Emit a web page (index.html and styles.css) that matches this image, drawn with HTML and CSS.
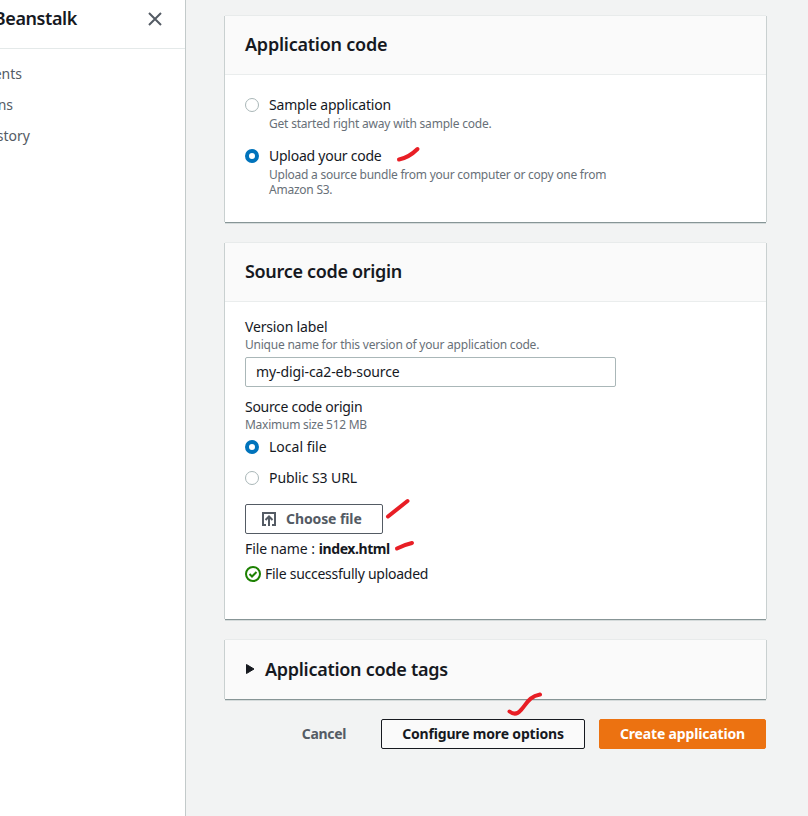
FILE: index.html
```html
<!DOCTYPE html>
<html lang="en">
<head>
<meta charset="utf-8">
<title>Elastic Beanstalk</title>
<link rel="stylesheet" href="styles.css">
</head>
<body>
<div class="app">
  <aside class="sidebar">
    <header class="side-head">
      <div class="side-title"><span>Beanstalk</span></div>
      <svg class="close" width="14" height="14" viewBox="0 0 14 14"><path d="M1 1l12 12M13 1L1 13"/></svg>
    </header>
    <nav class="side-nav">
      <a class="nav-env">ents</a>
      <a class="nav-app">ns</a>
      <a class="nav-hist">story</a>
    </nav>
  </aside>
  <main class="main">
    <section class="card card-code">
      <h2 class="card-head"><span class="h-code">Application code</span></h2>
      <div class="card-body">
        <div class="option">
          <i class="radio"></i>
          <div><div class="label l-sample">Sample application</div><p class="hint t-sample">Get started right away with sample code.</p></div>
        </div>
        <div class="option">
          <i class="radio on"></i>
          <div><div class="label l-upload">Upload your code</div><p class="hint t-upload">Upload a source bundle from your computer or copy one from Amazon S3.</p></div>
        </div>
      </div>
    </section>
    <section class="card card-origin">
      <h2 class="card-head"><span class="h-origin">Source code origin</span></h2>
      <div class="card-body">
        <div class="label l-version">Version label</div>
        <p class="hint t-version">Unique name for this version of your application code.</p>
        <div class="field"><span>my-digi-ca2-eb-source</span></div>
        <div class="label l-origin">Source code origin</div>
        <p class="hint t-max">Maximum size 512 MB</p>
        <div class="option small"><i class="radio on"></i><div class="label l-local">Local file</div></div>
        <div class="option small second"><i class="radio"></i><div class="label l-s3">Public S3 URL</div></div>
        <div class="btn choose">
          <svg width="16" height="16" viewBox="0 0 16 16"><path d="M5 14H2V2h12v12h-3M8 15V6M4.500 9L8 5.500 11.500 9"/></svg>
          <span>Choose file</span>
        </div>
        <div class="file"><span class="f-label">File name :</span><b>index.html</b></div>
        <div class="status">
          <svg width="16" height="16" viewBox="0 0 16 16"><circle cx="8" cy="8" r="7"/><path d="M4.500 8l2.500 2.500L11.500 6"/></svg>
          <span>File successfully uploaded</span>
        </div>
      </div>
    </section>
    <section class="card card-tags">
      <svg width="9" height="12" viewBox="0 0 9 12"><path d="M.5 1.500v9l7.500-4.500z"/></svg>
      <h2 class="h-tags">Application code tags</h2>
    </section>
    <div class="actions">
      <div class="cancel"><span>Cancel</span></div>
      <div class="btn configure"><span>Configure more options</span></div>
      <div class="btn create"><span>Create application</span></div>
    </div>
  </main>
  <svg class="marks" width="808" height="816" viewBox="0 0 808 816">
    <path d="M399 159.500q10-2 18.500-10.500"/>
    <path d="M388 516.500L407.500 501"/>
    <path d="M397 548.500q8-4 15-5.500"/>
    <path d="M509.500 711.500c4 3 8 2.500 11-1 6-6 8-14 19.500-16"/>
  </svg>
</div>
</body>
</html>
```
FILE: styles.css
```css
* { box-sizing: border-box; }
body { margin: 0; font-family: "Noto Sans", sans-serif; font-size: 14px; color: #16191f; background: #f2f3f3; }
h2, p { margin: 0; }
span { white-space: nowrap; }
svg { flex: none; fill: none; }
.app { position: relative; display: flex; width: 808px; height: 816px; overflow: hidden; }
.sidebar { width: 186px; flex: none; background: #fff; border-right: 1px solid #c3caca; }
.side-head { height: 49px; border-bottom: 1px solid #e4e9e9; display: flex; padding-top: 6px; }
.side-title { width: 77px; display: flex; justify-content: flex-end; font-size: 18px; font-weight: 600; line-height: 24px; letter-spacing: -.4px; }
.close { margin: 6px 0 0 71px; stroke: #545b64; stroke-width: 2; }
.side-nav { padding-top: 9px; color: #545b64; line-height: 31px; }
.side-nav a { display: flex; justify-content: flex-end; height: 31px; }
.nav-env { width: 22px; }
.nav-app { width: 13px; }
.nav-hist { width: 30px; }
.main { width: 541px; margin: 16px 0 0 39px; }
.card { background: #fff; margin-bottom: 21px; box-shadow: 0 1px 0 #879596, 0 2px 0 #d5dbdb, 1px 0 0 #c9d0d0, -1px 0 0 #c9d0d0, 0 -1px 0 #e8ebeb; }
.card-code { height: 206px; }
.card-origin { height: 376px; }
.card-head { height: 59px; padding: 16px 20px 0; background: #fafafa; border-bottom: 1px solid #eaeded; font-size: 18px; font-weight: 600; line-height: 24px; }
.h-code { letter-spacing: -.23px; }
.h-origin { letter-spacing: -.32px; }
.card-body { padding: 20px; }
.option { display: flex; height: 51px; }
.radio { width: 14px; height: 14px; flex: none; margin: 3px 10px 0 0; border: 1px solid #aab7b8; border-radius: 50%; background: #fff; }
.radio.on { border: 4px solid #0073bb; }
.label { line-height: 20px; height: 20px; white-space: nowrap; }
.l-sample { letter-spacing: -.17px; }
.l-upload { letter-spacing: -.25px; }
.l-version { letter-spacing: -.16px; }
.l-origin { letter-spacing: -.3px; }
.l-s3 { letter-spacing: -.06px; }
.hint { font-size: 12px; line-height: 15px; color: #687078; }
.t-sample { letter-spacing: -.2px; }
.t-upload { width: 345px; letter-spacing: -.24px; }
.t-version { letter-spacing: -.22px; }
.t-max { letter-spacing: -.26px; }
.card-code .hint { padding-top: 1px; }
.card-origin .card-body { padding-top: 15px; }
.field { width: 371px; height: 30px; margin: 5px 0 10px; border: 1px solid #aab7b8; border-radius: 2px; padding: 0 10px; line-height: 28px; letter-spacing: -.1px; }
.option.small { height: 20px; margin-top: 5px; }
.option.second { margin-top: 11px; }
.btn { display: flex; align-items: center; justify-content: center; height: 30px; border: 1px solid #545b64; border-radius: 2px; font-weight: 700; line-height: 20px; }
.choose { width: 138px; margin-top: 16px; padding-left: 15px; justify-content: flex-start; color: #545b64; gap: 9px; letter-spacing: -.1px; }
.choose svg { stroke: #545b64; stroke-width: 2; }
.file { display: flex; gap: 4px; height: 20px; line-height: 20px; margin-top: 5px; }
.file b { letter-spacing: -.43px; }
.f-label { letter-spacing: -.1px; }
.status { display: flex; align-items: center; gap: 4px; height: 20px; line-height: 20px; margin-top: 5px; letter-spacing: -.26px; }
.status svg { stroke: #1d8102; stroke-width: 2; }
.card-tags { display: flex; align-items: center; gap: 10px; height: 59px; padding: 0 21px 2px; background: #fafafa; margin-bottom: 20px; }
.card-tags svg { fill: #16191f; stroke: #16191f; stroke-linejoin: round; margin-top: 1px; }
.h-tags { font-size: 18px; font-weight: 600; line-height: 24px; white-space: nowrap; letter-spacing: -.28px; }
.actions { display: flex; justify-content: flex-end; }
.cancel { width: 44px; margin-right: 35px; display: flex; justify-content: center; line-height: 30px; color: #545b64; font-weight: 700; letter-spacing: -.3px; }
.configure { width: 204px; margin-right: 14px; border-color: #16191f; background: #fafafa; letter-spacing: -.17px; }
.create { width: 167px; border-color: #ec7211; background: #ec7211; color: #fff; letter-spacing: -.16px; }
.marks { position: absolute; left: 0; top: 0; pointer-events: none; stroke: #e81e25; stroke-width: 4; stroke-linecap: round; }
```
